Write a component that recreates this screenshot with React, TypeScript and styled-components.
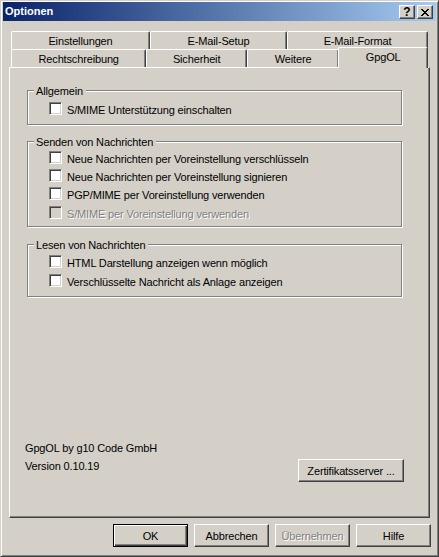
import React from 'react';
import styled, { createGlobalStyle } from 'styled-components';

const FACE = '#D4D0C8';
const SHADOW = '#808080';
const DARK = '#404040';

const Global = createGlobalStyle`
  html, body { margin: 0; padding: 0; background: ${FACE}; }
  body { font-family: "Liberation Sans", Arial, sans-serif; font-size: 11px; }
  * { box-sizing: border-box; }
`;

const Window = styled.div`
  width: 439px;
  height: 557px;
  background: ${FACE};
  border: 1px solid;
  border-color: ${FACE} ${DARK} ${DARK} ${FACE};
  box-shadow: inset 1px 1px #fff, inset -1px -1px ${SHADOW};
  padding: 1px 2px 2px 2px;
  display: flex;
  flex-direction: column;
  font-family: "Liberation Sans", Arial, sans-serif;
  font-size: 11px;
  letter-spacing: -0.15px;
  color: #000;
`;

const TitleBar = styled.div`
  height: 19px;
  display: flex;
  align-items: flex-start;
  padding: 0 3px 0 2px;
  background: linear-gradient(to right, #0a246a, #a6caf0);
`;

const TitleText = styled.div`
  flex: 1;
  color: #fff;
  font-weight: bold;
  letter-spacing: 0;
  line-height: 19px;
`;

const CaptionButtons = styled.div`
  display: flex;
  gap: 2px;
  padding-top: 3px;
`;

const CaptionButton = styled.div`
  width: 16px;
  height: 14px;
  background: ${FACE};
  border: 1px solid;
  border-color: #fff ${DARK} ${DARK} #fff;
  box-shadow: inset -1px -1px ${SHADOW};
  display: flex;
  align-items: center;
  justify-content: center;
  font-weight: bold;
  font-size: 12px;
  letter-spacing: 0;
  line-height: 12px;
  color: #000;
`;

const TabStrip = styled.div`
  margin: 10px 0 0 8px;
  width: 417px;
`;

const TabRow = styled.div`
  display: flex;
  height: 18px;
`;

const Tab = styled.div<{ $w: number; $active?: boolean }>`
  width: ${(p) => p.$w}px;
  height: ${(p) => (p.$active ? 21 : 18)}px;
  margin-top: ${(p) => (p.$active ? -2 : 0)}px;
  margin-left: ${(p) => (p.$active ? -1 : 0)}px;
  position: ${(p) => (p.$active ? 'relative' : 'static')};
  z-index: ${(p) => (p.$active ? 1 : 'auto')};
  background: ${FACE};
  border-top: 1px solid #fff;
  border-left: 1px solid #fff;
  border-right: 1px solid ${DARK};
  box-shadow: inset -1px 0 ${SHADOW};
  border-radius: 2px 2px 0 0;
  text-align: center;
  padding-top: 2px;
  line-height: 14px;
  white-space: nowrap;
`;

const Panel = styled.div`
  margin-left: 6px;
  width: 421px;
  height: 451px;
  border: 1px solid;
  border-color: #fff ${DARK} ${DARK} #fff;
  box-shadow: inset -1px -1px ${SHADOW};
  padding: 22px 27px 35px 17px;
  display: flex;
  flex-direction: column;
`;

const Group = styled.div<{ $pt: number; $pb: number; $mt: number }>`
  position: relative;
  margin-top: ${(p) => p.$mt}px;
  border: 1px solid ${SHADOW};
  box-shadow: inset 1px 1px #fff, 1px 1px #fff;
  padding: ${(p) => p.$pt}px 0 ${(p) => p.$pb}px 21px;
`;

const Legend = styled.div`
  position: absolute;
  top: -7px;
  left: 6px;
  padding: 0 3px 0 2px;
  background: ${FACE};
  line-height: 14px;
  white-space: nowrap;
`;

const CheckRow = styled.div<{ $h: number; $mt?: number }>`
  display: flex;
  align-items: flex-start;
  gap: 5px;
  height: ${(p) => p.$h}px;
  margin-top: ${(p) => p.$mt ?? 0}px;
`;

const CheckBox = styled.span<{ $disabled?: boolean }>`
  display: block;
  flex: none;
  width: 13px;
  height: 13px;
  margin-top: 2px;
  border: 1px solid;
  border-color: ${SHADOW} #fff #fff ${SHADOW};
  box-shadow: inset 1px 1px ${DARK}, inset -1px -1px ${FACE};
  background: ${(p) => (p.$disabled ? FACE : '#fff')};
`;

const CheckLabel = styled.span<{ $disabled?: boolean }>`
  line-height: 14px;
  padding-top: 3px;
  white-space: nowrap;
  color: ${(p) => (p.$disabled ? SHADOW : '#000')};
  text-shadow: ${(p) => (p.$disabled ? '1px 1px 0 #fff' : 'none')};
`;

const Spacer = styled.div`
  flex: 1;
`;

const Footer = styled.div`
  display: flex;
  justify-content: space-between;
  align-items: flex-start;
  margin: 0 -2px;
`;

const Info = styled.div`
  line-height: 18px;
  white-space: nowrap;
`;

const Button = styled.button<{ $w: number; $default?: boolean; $mt?: number }>`
  width: ${(p) => p.$w}px;
  height: 23px;
  margin: ${(p) => p.$mt ?? 0}px 0 0 0;
  padding: 0;
  background: ${FACE};
  font-family: inherit;
  font-size: 11px;
  letter-spacing: -0.15px;
  color: #000;
  border: 1px solid;
  border-color: ${(p) => (p.$default ? '#000' : `#fff ${DARK} ${DARK} #fff`)};
  box-shadow: ${(p) =>
    p.$default
      ? `inset 1px 1px #fff, inset -1px -1px ${DARK}, inset -2px -2px ${SHADOW}`
      : `inset -1px -1px ${SHADOW}`};
  white-space: nowrap;
  line-height: 14px;
  &:disabled {
    color: ${SHADOW};
    text-shadow: 1px 1px 0 #fff;
  }
`;

const ButtonRow = styled.div`
  display: flex;
  justify-content: flex-end;
  gap: 6px;
  margin-top: 6px;
  padding-right: 5px;
`;

const CloseGlyph = () => {
  const px: [number, number][] = [
    [0, 0], [1, 0], [6, 0], [7, 0],
    [1, 1], [2, 1], [5, 1], [6, 1],
    [2, 2], [3, 2], [4, 2], [5, 2],
    [3, 3], [4, 3],
    [2, 4], [3, 4], [4, 4], [5, 4],
    [1, 5], [2, 5], [5, 5], [6, 5],
    [0, 6], [1, 6], [6, 6], [7, 6],
  ];
  return (
    <svg width="8" height="7" viewBox="0 0 8 7" shapeRendering="crispEdges">
      {px.map(([x, y], i) => (
        <rect key={i} x={x} y={y} width="1" height="1" fill="#000" />
      ))}
    </svg>
  );
};

type Row = { label: string; disabled?: boolean; mt?: number };

const groups: { title: string; pt: number; pb: number; mt: number; h: number; rows: Row[] }[] = [
  {
    title: 'Allgemein',
    pt: 9,
    pb: 6,
    mt: 0,
    h: 18,
    rows: [{ label: 'S/MIME Unterstützung einschalten' }],
  },
  {
    title: 'Senden von Nachrichten',
    pt: 7,
    pb: 4,
    mt: 16,
    h: 18,
    rows: [
      { label: 'Neue Nachrichten per Voreinstellung verschlüsseln' },
      { label: 'Neue Nachrichten per Voreinstellung signieren' },
      { label: 'PGP/MIME per Voreinstellung verwenden' },
      { label: 'S/MIME per Voreinstellung verwenden', disabled: true, mt: 1 },
    ],
  },
  {
    title: 'Lesen von Nachrichten',
    pt: 8,
    pb: 5,
    mt: 17,
    h: 19,
    rows: [
      { label: 'HTML Darstellung anzeigen wenn möglich' },
      { label: 'Verschlüsselte Nachricht als Anlage anzeigen' },
    ],
  },
];

export default function App() {
  return (
    <>
      <Global />
      <Window>
        <TitleBar>
          <TitleText>Optionen</TitleText>
          <CaptionButtons>
            <CaptionButton>?</CaptionButton>
            <CaptionButton>
              <CloseGlyph />
            </CaptionButton>
          </CaptionButtons>
        </TitleBar>

        <TabStrip>
          <TabRow>
            <Tab $w={139}>Einstellungen</Tab>
            <Tab $w={137}>E-Mail-Setup</Tab>
            <Tab $w={141}>E-Mail-Format</Tab>
          </TabRow>
          <TabRow>
            <Tab $w={136}>Rechtschreibung</Tab>
            <Tab $w={101}>Sicherheit</Tab>
            <Tab $w={93}>Weitere</Tab>
            <Tab $w={90} $active>
              GpgOL
            </Tab>
          </TabRow>
        </TabStrip>

        <Panel>
          {groups.map((g) => (
            <Group key={g.title} $pt={g.pt} $pb={g.pb} $mt={g.mt}>
              <Legend>{g.title}</Legend>
              {g.rows.map((r) => (
                <CheckRow key={r.label} $h={g.h} $mt={r.mt}>
                  <CheckBox $disabled={r.disabled} />
                  <CheckLabel $disabled={r.disabled}>{r.label}</CheckLabel>
                </CheckRow>
              ))}
            </Group>
          ))}
          <Spacer />
          <Footer>
            <Info>
              <div>GpgOL by g10 Code GmbH</div>
              <div>Version 0.10.19</div>
            </Info>
            <Button $w={106} $mt={20}>
              Zertifikatsserver ...
            </Button>
          </Footer>
        </Panel>

        <ButtonRow>
          <Button $w={75} $default>
            OK
          </Button>
          <Button $w={75}>Abbrechen</Button>
          <Button $w={75} disabled>
            Übernehmen
          </Button>
          <Button $w={75}>Hilfe</Button>
        </ButtonRow>
      </Window>
    </>
  );
}
